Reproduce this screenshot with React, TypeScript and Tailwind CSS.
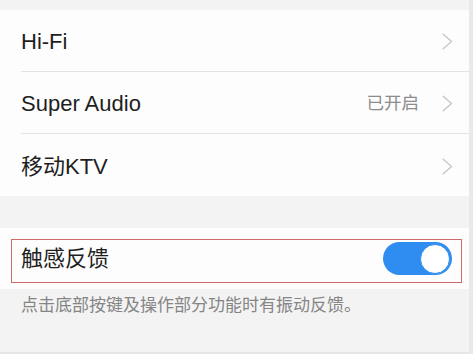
const font = { fontFamily: '"Liberation Sans", "Noto Sans CJK SC", sans-serif' };

function Chevron() {
  return (
    <svg width="11" height="17" viewBox="0 0 11 17" fill="none">
      <path d="M1.2 1.2 L9.5 8.5 L1.2 15.8" stroke="#c8c8c8" strokeWidth="1.5" strokeLinecap="round" strokeLinejoin="round" />
    </svg>
  );
}

function Row({ label, value, last }: { label: string; value?: string; last?: boolean }) {
  return (
    <div className="flex h-[62px] items-center pl-[21px]">
      <div
        className={`flex h-full flex-1 items-center pr-[16px] pt-[2px] ${last ? "" : "border-b border-[#e4e4e4]"}`}
      >
        <span className="flex-1 text-[22px] text-[#1f1f1f]">{label}</span>
        {value && <span className="mr-[23px] text-[17.5px] text-[#8c8c8c]">{value}</span>}
        <Chevron />
      </div>
    </div>
  );
}

export default function App() {
  return (
    <div className="flex h-[354px] w-[473px] bg-[#f3f3f3]" style={font}>
      <div className="flex flex-1 flex-col">
        <div className="h-[10px]" />
        <div className="bg-[#fdfdfd]">
          <Row label="Hi-Fi" />
          <Row label="Super Audio" value="已开启" />
          <Row label="移动KTV" last />
        </div>
        <div className="h-[32px]" />
        <div className="relative flex h-[61px] items-center bg-[#fdfdfd] pl-[21px] pr-[17px]">
          <span className="flex-1 text-[22px] text-[#1f1f1f]">触感反馈</span>
          <div className="flex h-[33px] w-[69px] items-center justify-end rounded-full bg-[#2f8cf0] pr-[2px]">
            <div className="h-[30px] w-[30px] rounded-full border border-[#2f8cf0] bg-white" />
          </div>
          <div className="absolute left-[11px] right-[7px] top-[11px] h-[44px] border border-[#d06a6a]" />
        </div>
        <div className="pl-[21px] pt-[4px] text-[17px] text-[#858585]">
          点击底部按键及操作部分功能时有振动反馈。
        </div>
        <div className="flex-1" />
        <div className="h-[2px] bg-[#e6e6e6]" />
      </div>
      <div className="w-[4px] bg-[#e9e9e9]" />
    </div>
  );
}
